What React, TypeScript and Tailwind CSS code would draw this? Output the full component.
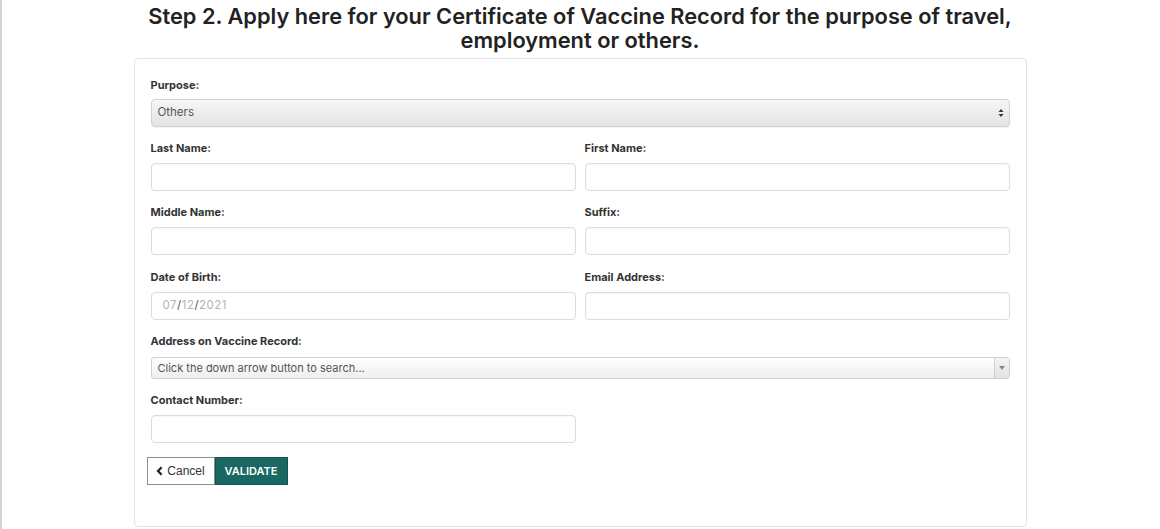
import React, { useState } from "react";

const Label = ({ children }: { children: React.ReactNode }) => (
    <label className="block h-[14px] leading-[14px] text-[11px] font-bold text-[#333] mb-[8px]">
        {children}
    </label>
);

const TextInput = ({ value, onChange }: { value: string; onChange: (v: string) => void }) => (
    <input
        type="text"
        value={value}
        onChange={(e) => onChange(e.target.value)}
        className="block w-full h-[28px] border border-[#dcdcdc] rounded-[4px] bg-white px-3 text-[12px] text-[#555] shadow-[inset_0_1px_1px_rgba(0,0,0,0.04)] focus:outline-none"
    />
);

export default function App() {
    const [form, setForm] = useState({
        lastName: "",
        firstName: "",
        middleName: "",
        suffix: "",
        email: "",
        contact: "",
    });

    const set = (key: keyof typeof form) => (v: string) => setForm({ ...form, [key]: v });

    return (
        <div
            className="min-h-[529px] bg-white shadow-[inset_2px_0_0_#d4d4d4]"
            style={{ fontFamily: "Inter, 'Liberation Sans', sans-serif" }}
        >
            <h1 className="pt-[4px] text-center text-[21.8px] leading-[24px] font-semibold text-[#222] mb-[6px]">
                Step 2. Apply here for your Certificate of Vaccine Record for the purpose of travel,
                <br />
                employment or others.
            </h1>

            <div className="mx-auto w-[893px] border border-[#e4e4e4] rounded-[4px] bg-white px-[16px] pt-[19px] pb-[41px]">
                {/* Purpose */}
                <div className="mb-[14px]">
                    <label className="block h-[14px] leading-[14px] text-[11px] font-bold text-[#333] mb-[7px]">
                        Purpose:
                    </label>
                    <div className="relative h-[28px] rounded-[4px] border border-[#d2d2d2] bg-gradient-to-b from-[#f6f6f6] to-[#e3e3e3] shadow-[0_1px_1px_rgba(0,0,0,0.06)] flex items-center px-[6px]">
                        <span className="text-[11.5px] text-[#555]">Others</span>
                        <svg className="absolute right-[5px] top-1/2 -translate-y-1/2" width="6" height="10" viewBox="0 0 6 10">
                            <path d="M0.5 4 L3 1 L5.5 4 Z" fill="#333" />
                            <path d="M0.5 6 L3 9 L5.5 6 Z" fill="#333" />
                        </svg>
                    </div>
                </div>

                <div className="grid grid-cols-2 gap-x-[9px]">
                    <div className="mb-[14px]">
                        <Label>Last Name:</Label>
                        <TextInput value={form.lastName} onChange={set("lastName")} />
                    </div>
                    <div className="mb-[14px]">
                        <Label>First Name:</Label>
                        <TextInput value={form.firstName} onChange={set("firstName")} />
                    </div>
                    <div className="mb-[15px]">
                        <Label>Middle Name:</Label>
                        <TextInput value={form.middleName} onChange={set("middleName")} />
                    </div>
                    <div className="mb-[15px]">
                        <Label>Suffix:</Label>
                        <TextInput value={form.suffix} onChange={set("suffix")} />
                    </div>
                    <div className="mb-[14px]">
                        <Label>Date of Birth:</Label>
                        <div className="h-[28px] border border-[#dcdcdc] rounded-[4px] bg-white px-[11px] flex items-center text-[11.5px] tracking-[0.5px]">
                            <span className="text-[#b4b4b4]">07</span>
                            <span className="text-[#555]">/</span>
                            <span className="text-[#b4b4b4]">12</span>
                            <span className="text-[#555]">/</span>
                            <span className="text-[#b4b4b4]">2021</span>
                        </div>
                    </div>
                    <div className="mb-[14px]">
                        <Label>Email Address:</Label>
                        <TextInput value={form.email} onChange={set("email")} />
                    </div>
                </div>

                {/* Address */}
                <div className="mb-[14px]">
                    <label className="block h-[14px] leading-[14px] text-[11px] font-bold text-[#333] mb-[9px]">
                        Address on Vaccine Record:
                    </label>
                    <div className="h-[22px] rounded-[3px] border border-[#d2d2d2] bg-gradient-to-b from-white to-[#eeeeee] flex items-stretch">
                        <div className="flex-1 flex items-center px-[6px] text-[11px] text-[#555]">
                            Click the down arrow button to search...
                        </div>
                        <div className="w-[15px] border-l border-[#cfcfcf] bg-gradient-to-b from-[#f4f4f4] to-[#e2e2e2] flex items-center justify-center">
                            <svg width="6" height="4" viewBox="0 0 6 4">
                                <path d="M0 0 L6 0 L3 4 Z" fill="#888" />
                            </svg>
                        </div>
                    </div>
                </div>

                {/* Contact */}
                <div className="grid grid-cols-2 gap-x-[9px] mb-[14px]">
                    <div>
                        <Label>Contact Number:</Label>
                        <TextInput value={form.contact} onChange={set("contact")} />
                    </div>
                </div>

                <div className="flex -ml-[4px]">
                    <button
                        type="button"
                        className="h-[28px] w-[68px] border border-[#8f8f8f] bg-white flex items-center justify-center gap-[4px] text-[12px] text-[#333]"
                        style={{ fontFamily: "'Liberation Sans', Arial, sans-serif" }}
                    >
                        <svg width="7" height="10" viewBox="0 0 7 10">
                            <path d="M5.6 1.2 L2 5 L5.6 8.8" stroke="#222" strokeWidth="2.2" fill="none" />
                        </svg>
                        Cancel
                    </button>
                    <button
                        type="submit"
                        className="h-[28px] w-[73px] border border-[#14524d] bg-[#1a6863] text-white text-[11px] font-semibold flex items-center justify-center"
                    >
                        VALIDATE
                    </button>
                </div>
            </div>
        </div>
    );
}
